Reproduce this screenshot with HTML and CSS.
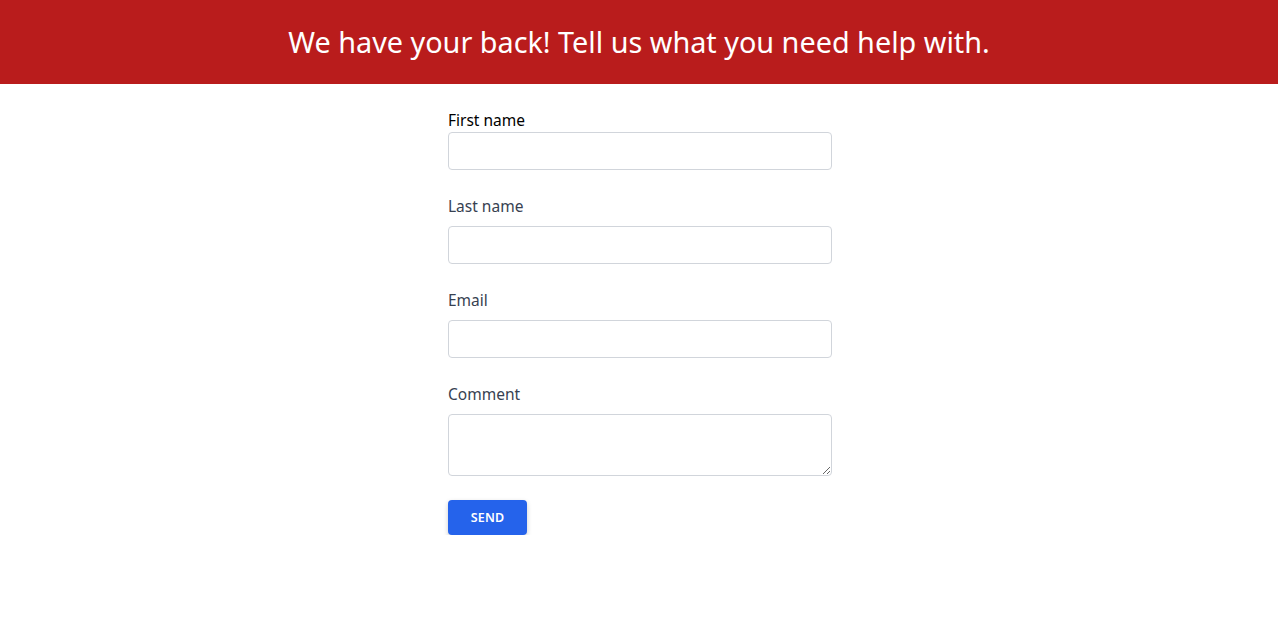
FILE: index.html
```html
<!DOCTYPE html>
<html lang="en">
<head>
<meta charset="utf-8">
<title>Help</title>
<link rel="stylesheet" href="styles.css">
</head>
<body>
<header class="banner">
  <h1 class="banner-title">We have your back! Tell us what you need help with.</h1>
</header>
<main class="page">
  <form class="form">
    <label class="label label-first" for="first">First name</label>
    <input class="field" id="first" type="text">
    <label class="label" for="last">Last name</label>
    <input class="field" id="last" type="text">
    <label class="label" for="email">Email</label>
    <input class="field" id="email" type="email">
    <label class="label" for="comment">Comment</label>
    <textarea class="field area" id="comment"></textarea>
    <div class="actions">
      <button class="send" type="button">SEND</button>
    </div>
  </form>
</main>
</body>
</html>
```
FILE: styles.css
```css
* { box-sizing: border-box; }
html, body { margin: 0; padding: 0; background: #ffffff; }
body { font-family: "Noto Sans", "Open Sans", sans-serif; color: #374151; }
.banner {
  background: #b91c1c;
  height: 84px;
  display: flex;
  align-items: center;
  justify-content: center;
}
.banner-title {
  margin: 0;
  color: #ffffff;
  font-weight: 400;
  font-size: 28.8px;
  line-height: 36px;
}
.page {
  display: flex;
  justify-content: center;
  padding-top: 24px;
  padding-left: 2px;
}
.form {
  width: 384px;
  display: flex;
  flex-direction: column;
}
.label {
  display: block;
  font-size: 15.5px;
  line-height: 24px;
  margin-top: 24px;
  margin-bottom: 8px;
  color: #374151;
}
.label-first {
  margin-top: 0;
  margin-bottom: 0;
  color: #000000;
}
.field {
  display: block;
  width: 384px;
  height: 38px;
  border: 1px solid #d1d5db;
  border-radius: 4px;
  background: #ffffff;
  font-family: inherit;
  font-size: 15px;
  padding: 6px 12px;
  margin: 0;
}
.area {
  height: 62px;
  resize: vertical;
}
.actions { margin-top: 24px; }
.send {
  width: 79px;
  height: 35px;
  border: none;
  border-radius: 4px;
  background: #2563eb;
  color: #ffffff;
  font-family: inherit;
  font-size: 12.5px;
  font-weight: 600;
  letter-spacing: 0.2px;
  box-shadow: 0 2px 5px rgba(0,0,0,0.2);
  cursor: pointer;
}
```
